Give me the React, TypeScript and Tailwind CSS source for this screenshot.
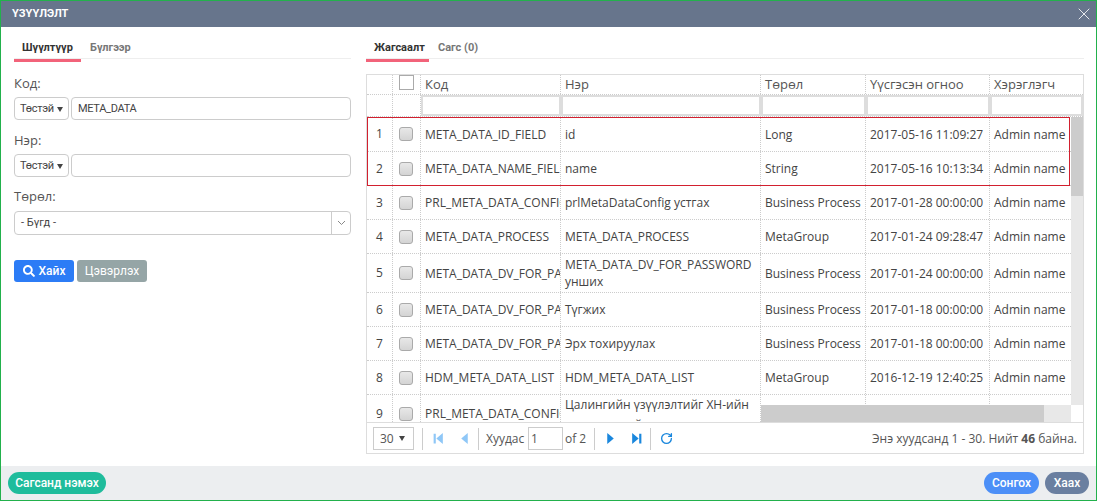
import { RotateCw, X } from 'lucide-react';
import { FaSearch } from 'react-icons/fa';

const COLS = 'grid grid-cols-[26px_28px_140px_200px_105px_124px_93px]';

const rows = [
  { n: 1, code: 'META_DATA_ID_FIELD', name: 'id', type: 'Long', date: '2017-05-16 11:09:27', user: 'Admin name', h: 'h-[35px]' },
  { n: 2, code: 'META_DATA_NAME_FIELD', name: 'name', type: 'String', date: '2017-05-16 10:13:34', user: 'Admin name', h: 'h-[34px]' },
  { n: 3, code: 'PRL_META_DATA_CONFIG', name: 'prlMetaDataConfig устгах', type: 'Business Process', date: '2017-01-28 00:00:00', user: 'Admin name', h: 'h-[34px]' },
  { n: 4, code: 'META_DATA_PROCESS', name: 'META_DATA_PROCESS', type: 'MetaGroup', date: '2017-01-24 09:28:47', user: 'Admin name', h: 'h-[34px]' },
  { n: 5, code: 'META_DATA_DV_FOR_PASSWORD', name: 'META_DATA_DV_FOR_PASSWORD унших', type: 'Business Process', date: '2017-01-24 00:00:00', user: 'Admin name', h: 'h-[39px]' },
  { n: 6, code: 'META_DATA_DV_FOR_PASSWORD', name: 'Түгжих', type: 'Business Process', date: '2017-01-18 00:00:00', user: 'Admin name', h: 'h-[34px]' },
  { n: 7, code: 'META_DATA_DV_FOR_PASSWORD', name: 'Эрх тохируулах', type: 'Business Process', date: '2017-01-18 00:00:00', user: 'Admin name', h: 'h-[34px]' },
  { n: 8, code: 'HDM_META_DATA_LIST', name: 'HDM_META_DATA_LIST', type: 'MetaGroup', date: '2016-12-19 12:40:25', user: 'Admin name', h: 'h-[34px]' },
  { n: 9, code: 'PRL_META_DATA_CONFIG', name: 'Цалингийн үзүүлэлтийг ХН-ийн тооцоолсной', type: '', date: '', user: '', h: 'h-[38px]' },
];

function Cell({ children, last }: { children?: React.ReactNode; last?: boolean }) {
  return (
    <div className={`flex items-center overflow-hidden pl-1 leading-[17px] ${last ? '' : 'border-r border-dotted border-[#ccc]'}`}>
      {children}
    </div>
  );
}

function Tabs({ items, width }: { items: string[]; width: string }) {
  return (
    <div className="flex h-[24px] border-b border-[#eeeeee] font-['Roboto',sans-serif] text-[11px] font-bold">
      <div className={`${width} h-[27px] shrink-0 border-b-[3px] border-[#f2637a] pl-2 pt-[5px] text-[#333]`}>{items[0]}</div>
      <div className="pl-[9px] pt-[5px] text-[#777]">{items[1]}</div>
    </div>
  );
}

function MatchSelect() {
  return (
    <div className="flex w-[55px] items-center justify-between rounded-[4px] border border-[#ccc] pl-[5px] pr-[5px] pt-[2px] font-['Roboto',sans-serif] text-[11px] tracking-[-0.3px] text-[#444]">
      Төстэй
      <span className="h-0 w-0 border-x-[3px] border-t-[5px] border-x-transparent border-t-[#444]" />
    </div>
  );
}

function PagerIcon({ d, color }: { d: string; color: string }) {
  return (
    <svg width="13" height="13" viewBox="0 0 12 12" fill={color}>
      <path d={d} />
    </svg>
  );
}

export default function App() {
  return (
    <div className="flex h-[501px] w-[1097px] flex-col overflow-hidden border border-[#22b14c] bg-white text-[#444] font-['Open_Sans',sans-serif]">
      <div className="flex h-[26px] shrink-0 items-center justify-between bg-[#67758c] pl-[11px] pr-[2px] font-['Roboto',sans-serif] text-[11px] font-bold text-white">
        <span>ҮЗҮҮЛЭЛТ</span>
        <X size={20} strokeWidth={1.2} className="text-[#e6e9ee]" />
      </div>

      <div className="flex min-h-0 flex-1 pt-[8px]">
        <div className="ml-[13px] w-[337px] shrink-0">
          <Tabs items={['Шүүлтүүр', 'Бүлгээр']} width="w-[67px]" />

          <label className="mt-[15px] block h-[23px] text-[13px] leading-[18px] text-[#555]">Код:</label>
          <div className="flex h-[23px] gap-[2px]">
            <MatchSelect />
            <div className="flex flex-1 items-center rounded-[4px] border border-[#ccc] pl-[6px] pt-[2px] font-['Roboto',sans-serif] text-[11px] tracking-[-0.3px]">META_DATA</div>
          </div>

          <label className="mt-[11px] block h-[23px] text-[13px] leading-[18px] text-[#555]">Нэр:</label>
          <div className="flex h-[23px] gap-[2px]">
            <MatchSelect />
            <div className="flex-1 rounded-[4px] border border-[#ccc]" />
          </div>

          <label className="mt-[10px] block h-[24px] text-[13px] leading-[18px] text-[#555]">Төрөл:</label>
          <div className="flex h-[24px] items-center rounded-[4px] border border-[#ccc] font-['Roboto',sans-serif] text-[11px]">
            <span className="flex-1 pl-[6px] pt-[1px]">- Бүгд -</span>
            <span className="flex h-full w-[19px] items-center justify-center border-l border-[#ccc]">
              <svg width="9" height="6" viewBox="0 0 9 6" fill="none" stroke="#888" strokeWidth="1">
                <path d="M1 1l3.5 3.5L8 1" />
              </svg>
            </span>
          </div>

          <div className="mt-[25px] flex h-[22px] gap-[3px] font-['Roboto',sans-serif] text-[12px] font-medium text-white">
            <button className="flex w-[60px] items-center justify-center gap-[4px] rounded-[3px] bg-[#2c7cf6]">
              <FaSearch size={12} />
              Хайх
            </button>
            <button className="w-[70px] rounded-[3px] bg-[#95a5a6] font-normal">Цэвэрлэх</button>
          </div>
        </div>

        <div className="ml-[15px] w-[718px] shrink-0">
          <Tabs items={['Жагсаалт', 'Сагс (0)']} width="w-[63px]" />

          <div className="mt-[15px] h-[380px] border border-[#ddd] text-[12px]">
            <div className={`${COLS} h-[20px] border-b border-dotted border-[#ccc] text-[13px] text-[#555]`}>
              <Cell />
              <div className="border-r border-dotted border-[#ccc] pl-[6px]">
                <div className="h-[15px] w-[15px] border border-[#aaa]" />
              </div>
              <Cell>Код</Cell>
              <Cell>Нэр</Cell>
              <Cell>Төрөл</Cell>
              <Cell>Үүсгэсэн огноо</Cell>
              <Cell last>Хэрэглэгч</Cell>
            </div>

            <div className={`${COLS} h-[22px] border-b border-dotted border-[#ccc]`}>
              <Cell />
              <Cell />
              {[0, 1, 2, 3, 4].map((i) => (
                <div key={i} className="border-x-2 border-y-2 border-[#ddd]" />
              ))}
            </div>

            <div className="relative h-[305px] overflow-hidden">
              {rows.map((r) => (
                <div key={r.n} className={`${COLS} ${r.h} border-b border-dotted border-[#ccc]`}>
                  <div className="flex items-center justify-center border-r border-dotted border-[#ccc]">{r.n}</div>
                  <div className="flex items-center border-r border-dotted border-[#ccc] pl-[6px]">
                    <span className="h-[14px] w-[14px] rounded-[3px] border border-[#aaa] bg-linear-to-b from-[#e8e8e8] to-[#d4d4d4]" />
                  </div>
                  <Cell><span className="w-full overflow-hidden whitespace-nowrap">{r.code}</span></Cell>
                  <Cell><span className={r.n === 9 ? 'self-start leading-[20px]' : ''}>{r.name}</span></Cell>
                  <Cell><span className="whitespace-nowrap">{r.type}</span></Cell>
                  <Cell><span className="whitespace-nowrap">{r.date}</span></Cell>
                  <Cell last><span className="whitespace-nowrap">{r.user}</span></Cell>
                </div>
              ))}

              <div className="pointer-events-none absolute left-0 top-0 h-[69px] w-[703px] border border-[#d2202f]" />

              <div className="absolute right-0 top-0 h-[288px] w-[12px] bg-[#e8e8e8]">
                <div className="h-[79px] bg-[#ccc]" />
              </div>
              <div className="absolute bottom-0 right-0 h-[17px] w-[12px] bg-white" />
              <div className="absolute bottom-0 left-[394px] right-[12px] h-[17px] bg-[#e8e8e8]">
                <div className="h-full w-[283px] bg-[#ccc]" />
              </div>
            </div>

            <div className="flex h-[32px] items-center border-t border-[#ddd] pl-[6px] pr-[6px] text-[#555]">
              <div className="flex h-[23px] w-[41px] shrink-0 items-center justify-between border border-[#ccc] pl-[6px] pr-[8px]">
                30
                <span className="h-0 w-0 border-x-[3px] border-t-[5px] border-x-transparent border-t-[#444]" />
              </div>
              <span className="ml-[8px] h-[22px] border-l border-[#ccc]" />
              <span className="ml-[5px] flex w-[20px] justify-center"><PagerIcon d="M1.5 1.5h2v9h-2zM10 1v10L4 6z" color="#8fc7f7" /></span>
              <span className="ml-[6px] flex w-[20px] justify-center"><PagerIcon d="M9 1v10L3 6z" color="#8fc7f7" /></span>
              <span className="ml-[4px] h-[22px] border-l border-[#ccc]" />
              <span className="ml-[7px] w-[42px] shrink-0">Хуудас</span>
              <div className="flex h-[23px] w-[35px] shrink-0 items-center border border-[#ccc] pl-[2px]">1</div>
              <span className="ml-[2px] w-[20px] shrink-0 whitespace-nowrap">of 2</span>
              <span className="ml-[9px] h-[22px] border-l border-[#ccc]" />
              <span className="ml-[5px] flex w-[20px] justify-center"><PagerIcon d="M3 1v10l6-5z" color="#1a87dd" /></span>
              <span className="ml-[6px] flex w-[20px] justify-center"><PagerIcon d="M2 1v10l6-5zM8.5 1.5h2v9h-2z" color="#1a87dd" /></span>
              <span className="ml-[4px] h-[22px] border-l border-[#ccc]" />
              <RotateCw size={13} strokeWidth={2.5} className="ml-[9px] text-[#1a87dd]" />
              <span className="ml-auto">Энэ хуудсанд 1 - 30. Нийт <b>46</b> байна.</span>
            </div>
          </div>
        </div>
      </div>

      <div className="flex h-[34px] shrink-0 items-center bg-[#eceef0] pl-[7px] pr-[7px] font-['Roboto',sans-serif] text-[12px] font-medium text-white">
        <button className="h-[22px] w-[98px] rounded-full bg-[#1fbc9c]">Сагсанд нэмэх</button>
        <button className="ml-auto h-[22px] w-[55px] rounded-full bg-[#4c8ff7]">Сонгох</button>
        <button className="ml-[6px] h-[22px] w-[44px] rounded-full bg-[#6a7fa0]">Хаах</button>
      </div>
    </div>
  );
}
